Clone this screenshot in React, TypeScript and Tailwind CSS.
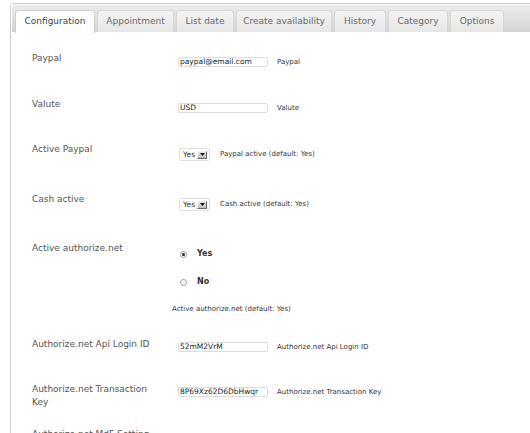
import React from 'react';

const tabs = [
  { label: 'Configuration', w: 'w-[80px]', active: true },
  { label: 'Appointment', w: 'w-[77px]' },
  { label: 'List date', w: 'w-[58px]' },
  { label: 'Create availability', w: 'w-[96px]' },
  { label: 'History', w: 'w-[52px]' },
  { label: 'Category', w: 'w-[60px]' },
  { label: 'Options', w: 'w-[54px]' },
];

const font = { fontFamily: '"DejaVu Sans", Verdana, sans-serif' };

const TextField: React.FC<{ value: string }> = ({ value }) => (
  <div className="w-[90px] h-[10px] border border-[#dcdcdc] rounded-[2px] bg-white flex items-center pl-[1px] text-[7.5px] leading-none text-[#222]">
    {value}
  </div>
);

const SelectYes: React.FC = () => (
  <div className="w-[31px] h-[13px] border border-[#e0e0e0] rounded-[2px] bg-white flex items-center pl-[3px] gap-[2px] text-[7.5px] leading-none text-[#333]">
    <span>Yes</span>
    <span className="w-[10px] h-[8px] bg-gradient-to-b from-[#e8e8e8] to-[#bdbdbd] border-r border-b border-[#666] border-l border-t border-l-[#f4f4f4] border-t-[#f4f4f4] flex items-center justify-center">
      <svg width="5" height="3" viewBox="0 0 5 3">
        <path d="M0 0h5L2.5 3z" fill="#111" />
      </svg>
    </span>
  </div>
);

const Radio: React.FC<{ checked?: boolean; label: string }> = ({ checked, label }) => (
  <div className="flex items-center h-[8px]">
    <span className="w-[7px] h-[7px] rounded-full border border-[#9a9a9a] bg-white flex items-center justify-center">
      {checked && <span className="w-[3px] h-[3px] rounded-full bg-[#222]" />}
    </span>
    <span className="ml-[10px] text-[8px] font-bold text-[#333] leading-none">{label}</span>
  </div>
);

const Row: React.FC<{ h: string; label: React.ReactNode; children: React.ReactNode }> = ({ h, label, children }) => (
  <div className={`flex ${h}`}>
    <div className="w-[146px] shrink-0 text-[9px] leading-[13px] text-[#555]">{label}</div>
    <div className="flex-1">{children}</div>
  </div>
);

const Hint: React.FC<{ children: React.ReactNode }> = ({ children }) => (
  <span className="text-[7px] leading-none text-[#333]">{children}</span>
);

export default function App() {
  return (
    <div className="w-[530px] h-[433px] overflow-hidden bg-white" style={font}>
      <div className="ml-[10px] mt-[3px] w-[560px] h-[460px] border border-[#cfcfcf] rounded-tl-[4px]">
        {/* Tab bar */}
        <div className="mx-[1px] mt-[1px] h-[27px] rounded-tl-[3px] bg-gradient-to-b from-[#ececec] to-[#d4d4d4] flex items-end gap-[2px] pl-[3px]">
          {tabs.map((t) =>
            t.active ? (
              <div
                key={t.label}
                className={`${t.w} h-[23px] bg-white border border-b-0 border-[#d0d0d0] rounded-t-[4px] flex items-center justify-center text-[9px] text-[#444] -mb-[1px]`}
              >
                {t.label}
              </div>
            ) : (
              <div
                key={t.label}
                className={`${t.w} h-[22px] bg-gradient-to-b from-[#f4f4f4] to-[#e6e6e6] border border-b-0 border-[#d6d6d6] rounded-t-[4px] flex items-center justify-center text-[9px] text-[#6a6a6a]`}
              >
                {t.label}
              </div>
            )
          )}
        </div>

        {/* Form */}
        <div className="pl-[21px] pt-[20px]">
          <Row h="h-[46px]" label="Paypal">
            <div className="flex items-center pt-[5px] gap-[9px]">
              <TextField value="paypal@email.com" />
              <Hint>Paypal</Hint>
            </div>
          </Row>
          <Row h="h-[45px]" label="Valute">
            <div className="flex items-center pt-[5px] gap-[9px]">
              <TextField value="USD" />
              <Hint>Valute</Hint>
            </div>
          </Row>
          <Row h="h-[50px]" label="Active Paypal">
            <div className="flex items-center pt-[5px] gap-[10px] pl-[1px]">
              <SelectYes />
              <Hint>Paypal active (default: Yes)</Hint>
            </div>
          </Row>
          <Row h="h-[49px]" label="Cash active">
            <div className="flex items-center pt-[5px] gap-[10px] pl-[1px]">
              <SelectYes />
              <Hint>Cash active (default: Yes)</Hint>
            </div>
          </Row>
          <Row h="h-[96px]" label="Active authorize.net">
            <div className="flex flex-col pt-[8px] pl-[2px]">
              <Radio checked label="Yes" />
              <div className="h-[20px]" />
              <Radio label="No" />
              <div className="h-[8px]" />
              <div className="-ml-[8px]">
                <Hint>Active authorize.net (default: Yes)</Hint>
              </div>
            </div>
          </Row>
          <Row h="h-[45px]" label="Authorize.net Api Login ID">
            <div className="flex items-center pt-[4px] gap-[9px]">
              <TextField value="52mM2VrM" />
              <Hint>Authorize.net Api Login ID</Hint>
            </div>
          </Row>
          <Row
            h="h-[45px]"
            label={
              <>
                Authorize.net Transaction
                <br />
                Key
              </>
            }
          >
            <div className="flex items-center pt-[4px] gap-[9px]">
              <TextField value="8P69Xz62D6DbHwqr" />
              <Hint>Authorize.net Transaction Key</Hint>
            </div>
          </Row>
          <Row h="h-[45px]" label="Authorize.net MdF Setting">
            <div />
          </Row>
        </div>
      </div>
    </div>
  );
}
